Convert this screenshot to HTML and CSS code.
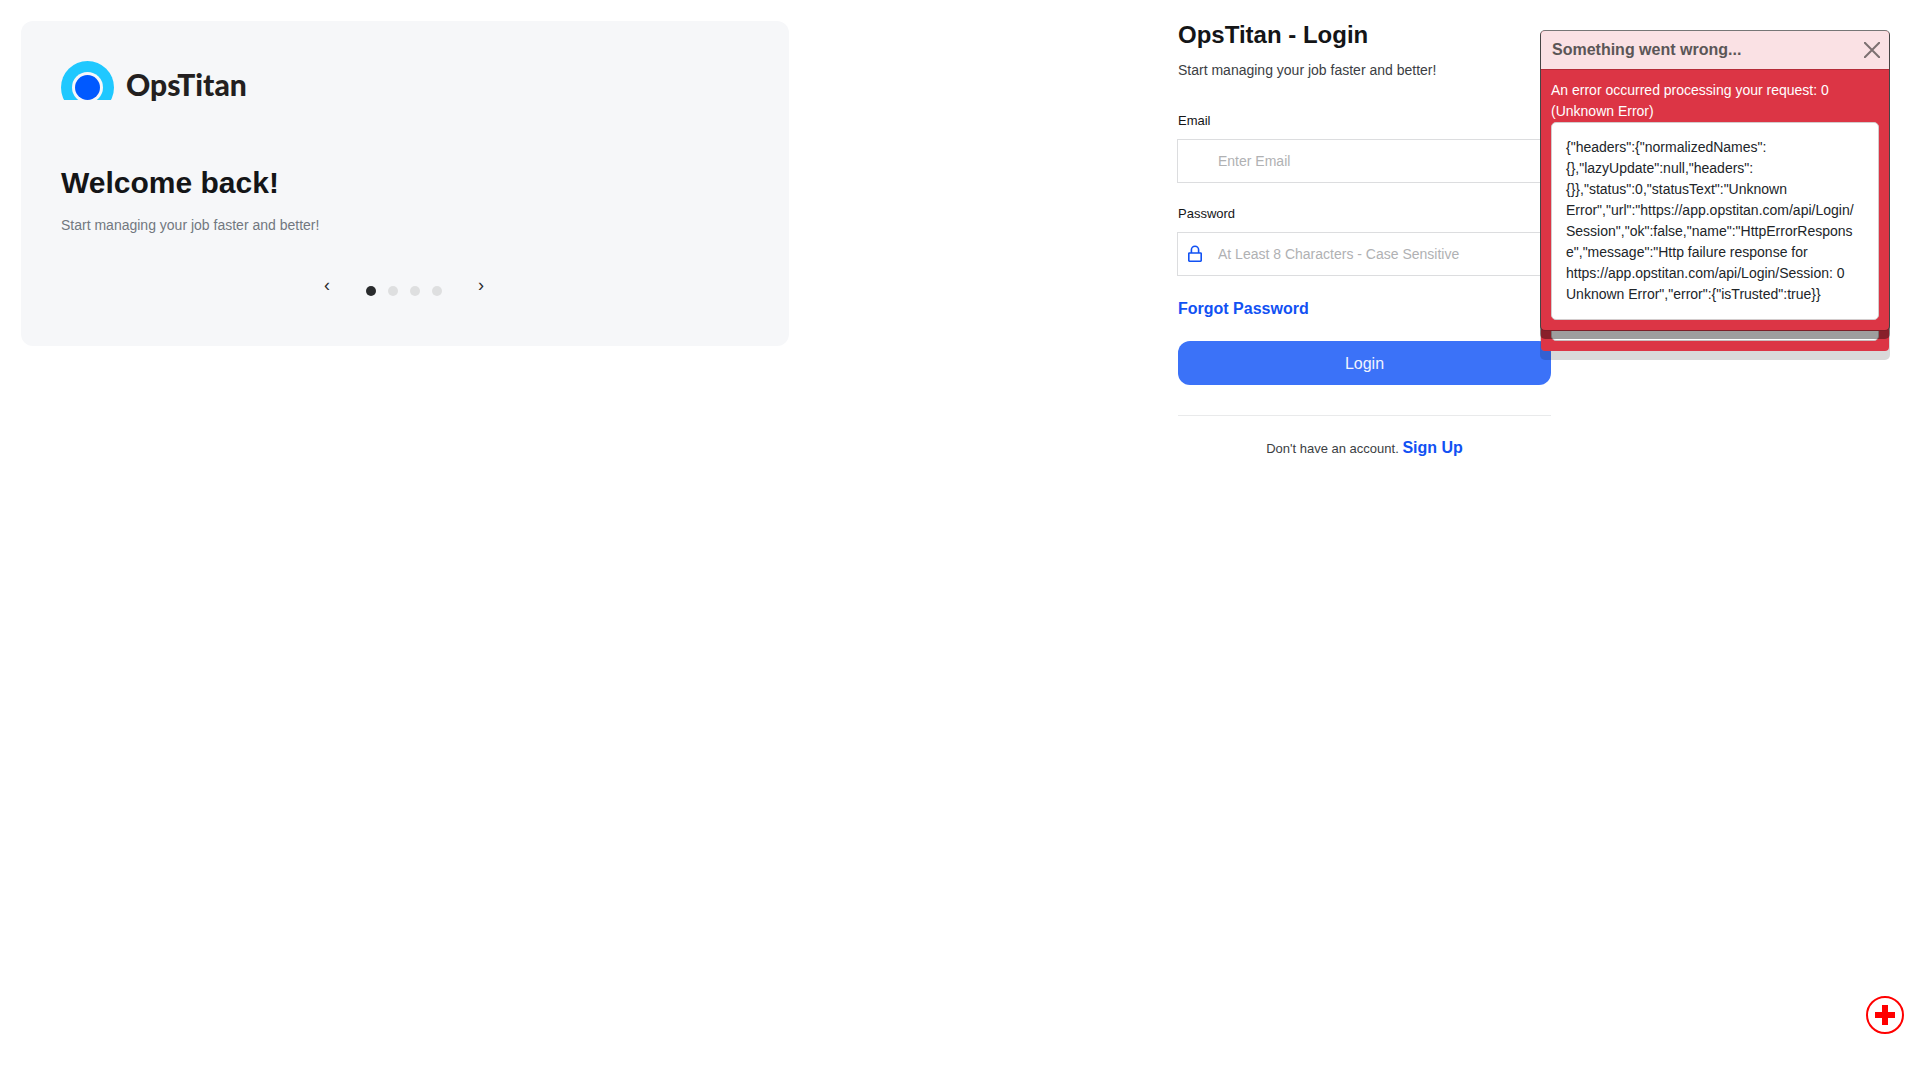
FILE: index.html
```html
<!DOCTYPE html>
<html lang="en">
<head>
<meta charset="utf-8">
<meta name="viewport" content="width=device-width, initial-scale=1">
<title>OpsTitan - Login</title>
<link rel="stylesheet" href="styles.css">
</head>
<body>
<main class="page">
  <section class="welcome" aria-label="Welcome">
    <div class="logo">
      <svg class="logo-mark" viewBox="0 0 53 39" width="53" height="39" aria-hidden="true">
        <circle cx="26.5" cy="26.5" r="26.5" fill="#1fc8ff"/>
        <circle cx="26.5" cy="26.5" r="15.5" fill="#f6f7f9"/>
        <circle cx="26.5" cy="26.5" r="12.5" fill="#0059ff"/>
      </svg>
      <span class="logo-name">OpsTitan</span>
    </div>
    <h2 class="welcome-title">Welcome back!</h2>
    <p class="welcome-text">Start managing your job faster and better!</p>
    <div class="carousel">
      <button class="arrow" type="button" aria-label="Previous">‹</button>
      <div class="dots">
        <button class="dot dot-active" type="button" aria-label="Slide 1"></button>
        <button class="dot" type="button" aria-label="Slide 2"></button>
        <button class="dot" type="button" aria-label="Slide 3"></button>
        <button class="dot" type="button" aria-label="Slide 4"></button>
      </div>
      <button class="arrow" type="button" aria-label="Next">›</button>
    </div>
  </section>

  <section class="login">
    <form class="login-form">
      <h1 class="login-title">OpsTitan - Login</h1>
      <p class="login-text">Start managing your job faster and better!</p>
      <label class="label" for="email">Email</label>
      <div class="field">
        <input class="input" id="email" type="email" placeholder="Enter Email">
      </div>
      <label class="label" for="password">Password</label>
      <div class="field">
        <svg class="lock" viewBox="0 0 14 18" width="14" height="18" fill="none" stroke="#1151f3" stroke-width="1.6" aria-hidden="true">
          <rect x="0.8" y="8" width="12.4" height="8.2" rx="0.6"/>
          <path d="M3.4 8V4.8a3.6 3.6 0 0 1 7.2 0V8"/>
        </svg>
        <input class="input" id="password" type="password" placeholder="At Least 8 Characters - Case Sensitive">
      </div>
      <a class="link forgot" href="#">Forgot Password</a>
      <button class="submit" type="submit">Login</button>
      <hr class="rule">
      <p class="signup">Don't have an account. <a class="link" href="#">Sign Up</a></p>
    </form>
  </section>
</main>

<div class="toasts">
  <div class="toast toast-back" aria-hidden="true"><div class="toast-sheet"></div></div>
  <div class="toast toast-front" role="alert">
    <div class="toast-header">
      <strong>Something went wrong...</strong>
      <button class="close" type="button" aria-label="Close">
        <svg viewBox="0 0 16 16" width="16" height="16" stroke="#7c7071" stroke-width="2" stroke-linecap="round" aria-hidden="true"><path d="M0.8 0.8l14.4 14.4M15.2 0.8L0.8 15.2"/></svg>
      </button>
    </div>
    <div class="toast-body">
      <p class="toast-message">An error occurred processing your request: 0 (Unknown Error)</p>
      <div class="toast-detail">{"headers":{"normalizedNames":<br>{},"lazyUpdate":null,"headers":<br>{}},"status":0,"statusText":"Unknown<br>Error","url":"https://app.opstitan.com/api/Login/<br>Session","ok":false,"name":"HttpErrorRespons<br>e","message":"Http failure response for<br>https://app.opstitan.com/api/Login/Session: 0<br>Unknown Error","error":{"isTrusted":true}}</div>
    </div>
  </div>
</div>

<button class="help" type="button" aria-label="Help">
  <svg viewBox="0 0 38 38" width="38" height="38" aria-hidden="true">
    <circle cx="19" cy="19" r="18" fill="#fff" stroke="#f00" stroke-width="2"/>
    <path d="M16 9h6v7h7v6h-7v7h-6v-7H9v-6h7z" fill="#f00"/>
  </svg>
</button>
</body>
</html>
```
FILE: styles.css
```css
* {
  box-sizing: border-box;
}

body {
  margin: 0;
  background: #fff;
  color: #141517;
  font-family: "Liberation Sans", Arial, sans-serif;
  font-size: 14px;
  line-height: 21px;
  text-rendering: optimizeSpeed;
}

h1,
h2,
p {
  margin: 0;
}

button {
  padding: 0;
  border: 0;
  background: none;
  font: inherit;
  color: inherit;
  cursor: pointer;
}

svg {
  display: block;
}

.page {
  display: flex;
  align-items: flex-start;
  gap: 20px;
  padding: 21px 0;
}

.welcome {
  flex: 0 0 40%;
  margin-left: 21px;
  padding: 40px 40px 50px;
  border-radius: 12px;
  background: #f6f7f9;
}

.logo {
  display: flex;
  gap: 12px;
  height: 39px;
}

.logo-name {
  padding-top: 5px;
  color: #231f20;
  font-family: Lato, sans-serif;
  font-size: 30px;
  font-weight: 900;
  line-height: 36px;
}

.welcome-title {
  margin-top: 65px;
  font-size: 30px;
  line-height: 36px;
}

.welcome-text {
  margin-top: 14px;
  color: #72777f;
}

.carousel {
  display: flex;
  gap: 36px;
  margin: 39px 0 0 263px;
}

.arrow {
  width: 6px;
  height: 21px;
  color: #2b2d2f;
  font-size: 18px;
}

.dots {
  display: flex;
  gap: 12px;
  padding-top: 11px;
}

.dot {
  width: 10px;
  height: 10px;
  border-radius: 50%;
  background: #dedfe0;
}

.dot-active {
  background: #292b2d;
}

.login {
  flex: 1;
  display: flex;
  justify-content: center;
}

.login-form {
  display: flex;
  flex-direction: column;
  width: 100%;
  max-width: 373px;
}

.login-title {
  font-size: 24px;
  line-height: 28px;
}

.login-text {
  margin: 11px 0 31px;
  color: #3b3e43;
}

.label {
  font-size: 13px;
  line-height: 18px;
}

.field {
  position: relative;
  margin: 9px -1px 22px;
}

.input {
  display: block;
  width: 100%;
  height: 44px;
  padding: 0 12px 0 40px;
  border: 1px solid #dcdddf;
  background: #fff;
  color: #141517;
  font: inherit;
}

.input::placeholder {
  color: #b0b1b3;
  opacity: 1;
}

.lock {
  position: absolute;
  top: 13px;
  left: 11px;
}

.link {
  color: #1151f3;
  font-size: 16px;
  font-weight: 700;
  text-decoration: none;
}

.forgot {
  align-self: flex-start;
}

.submit {
  height: 44px;
  margin-top: 22px;
  border-radius: 12px;
  background: #3b72f8;
  color: #f1f4fe;
  font-size: 16px;
}

.rule {
  width: 100%;
  height: 1px;
  margin: 30px 0 21px;
  border: 0;
  background: #e9eaeb;
}

.signup {
  color: #3b3e43;
  font-size: 13px;
  text-align: center;
}

.toasts {
  position: absolute;
  top: 30px;
  right: 30px;
  display: grid;
  width: 350px;
}

.toast {
  grid-area: 1 / 1;
  border: 1px solid transparent;
  border-radius: 5px;
  background: #dc3545;
  background-clip: padding-box;
}

.toast-back {
  display: flex;
  margin-bottom: -21px;
  padding: 10px;
  box-shadow: 0 8px 0 rgba(0, 0, 0, 0.15);
}

.toast-sheet {
  flex: 1;
  border: 1px solid #c9babc;
  border-radius: 5px;
  background: #fff;
}

.toast-front {
  border-color: #767676 #454545 #7c1e27;
  box-shadow: 0 8px 0 rgba(0, 0, 0, 0.38);
}

.toast-header {
  display: flex;
  align-items: center;
  justify-content: space-between;
  height: 39px;
  padding: 0 9px 1px 11px;
  border-bottom: 1px solid #b52c39;
  border-radius: 4px 4px 0 0;
  background: #fae1e4;
  color: #5b5657;
  font-size: 16px;
}

.toast-body {
  padding: 10px;
  color: #fff;
}

.toast-detail {
  padding: 14px;
  border: 1px solid #d3cccd;
  border-radius: 5px;
  background: #fff;
  color: #212529;
  overflow-wrap: anywhere;
}

.help {
  position: fixed;
  right: 16px;
  bottom: 46px;
}
```
